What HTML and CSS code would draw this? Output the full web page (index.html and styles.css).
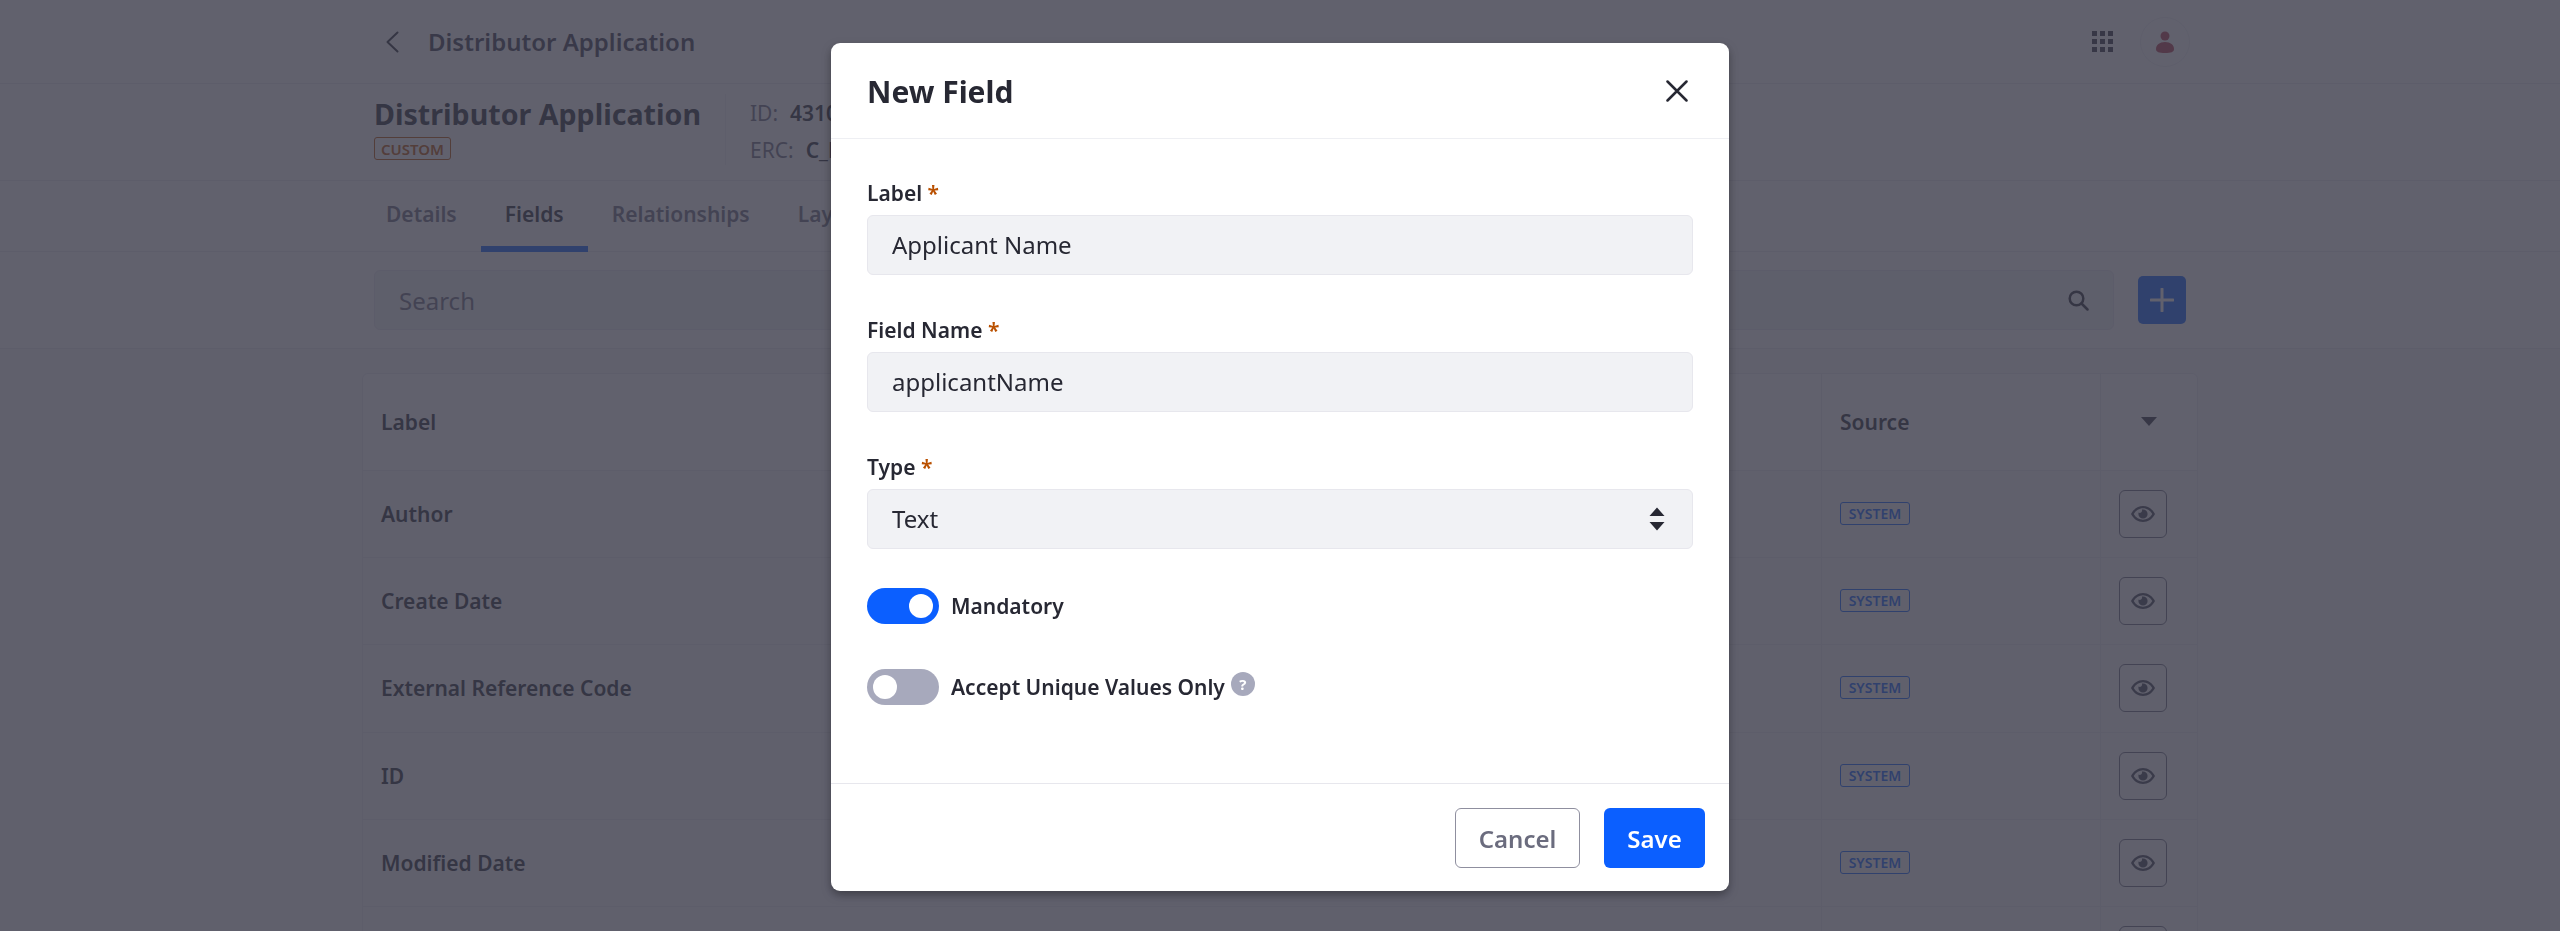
FILE: index.html
```html
<!DOCTYPE html>
<html lang="en">
<head>
<meta charset="utf-8">
<title>New Field</title>
<link rel="stylesheet" href="styles.css">
</head>
<body>
<div class="page">
  <header class="topbar">
    <div class="wrap topbar-in">
      <svg class="back" viewBox="0 0 14 22"><path d="M12.500 1.500 2.500 11l10 9.500"/></svg>
      <span class="crumb">Distributor Application</span>
      <svg class="apps" viewBox="0 0 21 21"><path d="M0 0h5v5H0zM8 0h5v5H8zM16 0h5v5h-5zM0 8h5v5H0zM8 8h5v5H8zM16 8h5v5h-5zM0 16h5v5H0zM8 16h5v5H8zM16 16h5v5h-5z"/></svg>
      <span class="avatar"><svg viewBox="0 0 20 22"><circle cx="10" cy="5" r="4.500"/><path d="M10 11c5.500 0 9 3 9 7 0 3-3 4-9 4s-9-1-9-4c0-4 3.500-7 9-7z"/></svg></span>
    </div>
  </header>
  <section class="titleband">
    <div class="wrap titleband-in">
      <div class="titlecol">
        <h1 class="title">Distributor Application</h1>
        <span class="badge badge-custom">CUSTOM</span>
      </div>
      <div class="meta">
        <div class="meta-line"><span class="meta-key">ID:</span><b class="meta-val">43101</b></div>
        <div class="meta-line"><span class="meta-key">ERC:</span><b class="meta-val">C_DistributorApplication</b></div>
      </div>
    </div>
  </section>
  <nav class="tabs">
    <div class="wrap tabs-in">
      <a class="tab">Details</a>
      <a class="tab tab-active">Fields</a>
      <a class="tab">Relationships</a>
      <a class="tab">Layouts</a>
    </div>
  </nav>
  <section class="toolband">
    <div class="wrap toolbar">
      <div class="search">
        <span class="search-text">Search</span>
        <svg class="search-icon" viewBox="0 0 21 21"><circle cx="8.500" cy="8.500" r="6.800"/><path d="m13.500 13.500 6 6"/></svg>
      </div>
      <span class="plus"><svg viewBox="0 0 24 24"><path d="M12 1v22M1 12h22"/></svg></span>
    </div>
  </section>
  <main class="content">
    <div class="table">
      <div class="row row-head"><span class="cell-label">Label</span><span class="cell-src">Source</span><span class="cell-act"><svg class="caret" viewBox="0 0 16 9"><path d="M0 0h16L8 9z"/></svg></span></div>
      <div class="row"><span class="cell-label">Author</span><span class="cell-src"><span class="badge badge-system">SYSTEM</span></span><span class="cell-act"><span class="eye-btn"><svg viewBox="0 0 24 16"><path fill-rule="evenodd" d="M12 0c5 0 9.500 3 12 8-2.500 5-7 8-12 8S2.500 13 0 8c2.500-5 7-8 12-8zm0 2.300C8.200 2.300 4.800 4.400 2.700 8c2.100 3.600 5.500 5.700 9.300 5.700s7.200-2.100 9.300-5.700C19.200 4.400 15.800 2.300 12 2.300z"/><path d="M12 3.400a4.600 4.600 0 1 1-4.600 4.600c0-.5.100-1 .2-1.400A2.400 2.400 0 0 0 10.900 3.500L12 3.400z"/></svg></span></span></div>
      <div class="row"><span class="cell-label">Create Date</span><span class="cell-src"><span class="badge badge-system">SYSTEM</span></span><span class="cell-act"><span class="eye-btn"><svg viewBox="0 0 24 16"><path fill-rule="evenodd" d="M12 0c5 0 9.500 3 12 8-2.500 5-7 8-12 8S2.500 13 0 8c2.500-5 7-8 12-8zm0 2.300C8.200 2.300 4.800 4.400 2.700 8c2.100 3.600 5.500 5.700 9.300 5.700s7.200-2.100 9.300-5.700C19.200 4.400 15.800 2.300 12 2.300z"/><path d="M12 3.400a4.600 4.600 0 1 1-4.600 4.600c0-.5.100-1 .2-1.400A2.400 2.400 0 0 0 10.900 3.500L12 3.400z"/></svg></span></span></div>
      <div class="row"><span class="cell-label">External Reference Code</span><span class="cell-src"><span class="badge badge-system">SYSTEM</span></span><span class="cell-act"><span class="eye-btn"><svg viewBox="0 0 24 16"><path fill-rule="evenodd" d="M12 0c5 0 9.500 3 12 8-2.500 5-7 8-12 8S2.500 13 0 8c2.500-5 7-8 12-8zm0 2.300C8.200 2.300 4.800 4.400 2.700 8c2.100 3.600 5.500 5.700 9.300 5.700s7.200-2.100 9.300-5.700C19.200 4.400 15.800 2.300 12 2.300z"/><path d="M12 3.400a4.600 4.600 0 1 1-4.600 4.600c0-.5.100-1 .2-1.400A2.400 2.400 0 0 0 10.900 3.500L12 3.400z"/></svg></span></span></div>
      <div class="row"><span class="cell-label">ID</span><span class="cell-src"><span class="badge badge-system">SYSTEM</span></span><span class="cell-act"><span class="eye-btn"><svg viewBox="0 0 24 16"><path fill-rule="evenodd" d="M12 0c5 0 9.500 3 12 8-2.500 5-7 8-12 8S2.500 13 0 8c2.500-5 7-8 12-8zm0 2.300C8.200 2.300 4.800 4.400 2.700 8c2.100 3.600 5.500 5.700 9.300 5.700s7.200-2.100 9.300-5.700C19.200 4.400 15.800 2.300 12 2.300z"/><path d="M12 3.400a4.600 4.600 0 1 1-4.600 4.600c0-.5.100-1 .2-1.400A2.400 2.400 0 0 0 10.900 3.500L12 3.400z"/></svg></span></span></div>
      <div class="row"><span class="cell-label">Modified Date</span><span class="cell-src"><span class="badge badge-system">SYSTEM</span></span><span class="cell-act"><span class="eye-btn"><svg viewBox="0 0 24 16"><path fill-rule="evenodd" d="M12 0c5 0 9.500 3 12 8-2.500 5-7 8-12 8S2.500 13 0 8c2.500-5 7-8 12-8zm0 2.300C8.200 2.300 4.800 4.400 2.700 8c2.100 3.600 5.500 5.700 9.300 5.700s7.200-2.100 9.300-5.700C19.200 4.400 15.800 2.300 12 2.300z"/><path d="M12 3.400a4.600 4.600 0 1 1-4.600 4.600c0-.5.100-1 .2-1.400A2.400 2.400 0 0 0 10.900 3.500L12 3.400z"/></svg></span></span></div>
      <div class="row"><span class="cell-label"></span><span class="cell-src"></span><span class="cell-act"><span class="eye-btn"></span></span></div>
    </div>
  </main>
</div>
<div class="backdrop"></div>
<div class="modal">
  <div class="modal-head">
    <h2 class="modal-title">New Field</h2>
    <svg class="close" viewBox="0 0 22 22"><path d="M1.500 1.500l19 19M20.500 1.500l-19 19"/></svg>
  </div>
  <div class="modal-body">
    <div class="field">
      <label class="flabel">Label <span class="req">*</span></label>
      <div class="input">Applicant Name</div>
    </div>
    <div class="field">
      <label class="flabel">Field Name <span class="req">*</span></label>
      <div class="input">applicantName</div>
    </div>
    <div class="field">
      <label class="flabel">Type <span class="req">*</span></label>
      <div class="input input-select">Text
        <svg class="updown" viewBox="0 0 16 24"><path d="M8 .500l7.500 8.500H.500zM8 23.500L.500 15h15z"/></svg>
      </div>
    </div>
    <div class="toggle-row toggle-first">
      <span class="switch switch-on"><span class="knob"></span></span>
      <span class="tlabel">Mandatory</span>
    </div>
    <div class="toggle-row">
      <span class="switch"><span class="knob"></span></span>
      <span class="tlabel">Accept Unique Values Only</span>
      <span class="help">?</span>
    </div>
  </div>
  <div class="modal-foot">
    <button class="btn btn-cancel">Cancel</button>
    <button class="btn btn-save">Save</button>
  </div>
</div>
</body>
</html>
```

FILE: styles.css
```css
* { box-sizing: border-box; }
html, body { margin: 0; height: 931px; overflow: hidden; }
body { font-family: "Noto Sans", "Open Sans", sans-serif; color: #272833; background: #fff; font-size: 21px; }
h1, h2 { margin: 0; }

.page { height: 931px; overflow: hidden; }
.wrap { width: 1836px; margin: 0 auto; padding: 0 12px; }

.topbar { height: 84px; border-bottom: 1px solid #e9e9ef; }
.topbar-in { display: flex; align-items: center; height: 83px; }
.back { width: 14px; height: 22px; margin-left: 11px; fill: none; stroke: #272833; stroke-width: 2; stroke-linecap: round; stroke-linejoin: round; }
.crumb { margin-left: 29px; font-size: 24px; font-weight: 600; color: #3a3b4c; flex: 1; }
.apps { width: 21px; height: 21px; fill: #30313f; margin-right: 27px; }
.avatar { width: 50px; height: 50px; margin-right: -4px; border: 1px solid #eeeef2; border-radius: 50%; display: flex; align-items: center; justify-content: center; }
.avatar svg { width: 20px; height: 22px; fill: #b5384a; }

.titleband { height: 97px; border-bottom: 1px solid #e9e9ef; }
.titleband-in { display: flex; align-items: flex-start; padding-top: 10px; }
.titlecol { display: flex; flex-direction: column; align-items: flex-start; width: 352px; height: 71px; border-right: 1px solid #eeeef2; }
.title { font-size: 28.600px; line-height: 40px; font-weight: 700; color: #272833; white-space: nowrap; }
.badge { display: inline-flex; align-items: center; justify-content: center; border: 1px solid; border-radius: 3px; font-weight: 600; }
.badge-custom { height: 23px; width: 77px; margin-top: 3px; font-size: 15px; color: #b95000; border-color: #b95000; }
.meta { margin-left: 24px; }
.meta-line { display: flex; height: 37px; align-items: center; white-space: nowrap; }
.meta-key { color: #6b6c7e; margin-right: 12px; }
.meta-val { font-weight: 600; color: #272833; }

.tabs { height: 71px; border-bottom: 1px solid #e9e9ef; }
.tabs-in { display: flex; height: 70px; }
.tab { display: flex; align-items: center; height: 71px; padding: 1px 24px; font-size: 21px; font-weight: 600; color: #6b6c7e; border-bottom: 6px solid transparent; }
.tab:first-child { margin-left: -12px; }
.tab-active { color: #272833; border-bottom-color: #0b5fff; }

.toolband { height: 97px; padding-top: 18px; border-bottom: 1px solid #e9e9ef; }
.toolbar { display: flex; align-items: center; height: 60px; }
.search { width: 1740px; height: 60px; display: flex; align-items: center; padding: 0 24px; background: #f1f2f5; border: 1px solid #e7e7ed; border-radius: 6px; }
.search-text { flex: 1; font-size: 24px; color: #6b6c7e; }
.search-icon { width: 21px; height: 21px; fill: none; stroke: #272833; stroke-width: 2.500; stroke-linecap: round; }
.plus { width: 48px; height: 48px; margin-left: 24px; background: #0b5fff; border-radius: 5px; display: flex; align-items: center; justify-content: center; }
.plus svg { width: 24px; height: 24px; fill: none; stroke: #fff; stroke-width: 3; stroke-linecap: round; }

.content { padding-top: 24px; background: #f7f8f9; height: 600px; }
.table { width: 1836px; margin: 0 auto; background: #fff; border: 1px solid #e9e9ef; border-radius: 6px 6px 0 0; }
.row { display: grid; grid-template-columns: 1fr 279px 97px; height: 87.200px; border-bottom: 1px solid #e9e9ef; background: #f8f9fb; font-size: 21px; font-weight: 600; }
.row-head { height: 97px; background: #fff; border-radius: 6px 6px 0 0; }
.cell-label, .cell-src, .cell-act { display: flex; align-items: center; }
.cell-label { padding-left: 18px; color: #272833; }
.cell-src { padding-left: 18px; border-left: 1px solid #e9e9ef; color: #272833; }
.cell-act { border-left: 1px solid #e9e9ef; padding-left: 18px; }
.caret { width: 16px; height: 9px; fill: #30313f; margin-left: 22px; margin-top: -2px; }
.badge-system { width: 70px; height: 23px; margin-top: -1px; font-size: 14px; color: #0b5fff; border-color: #0b5fff; background: none; }
.eye-btn { width: 48px; height: 48px; border: 1.500px solid #6b6c7e; border-radius: 6px; display: flex; align-items: center; justify-content: center; }
.eye-btn svg { width: 24px; height: 16px; fill: #3f4050; }

.backdrop { position: fixed; inset: 0; background: rgba(58, 58, 72, .8); }

.modal { position: fixed; left: 831px; top: 43px; width: 898px; height: 848px; background: #fff; border-radius: 9px; box-shadow: 0 4px 10px rgba(0, 0, 0, .35); display: flex; flex-direction: column; }
.modal-head { height: 96px; flex: none; border-bottom: 1px solid #eeeff3; display: flex; align-items: center; justify-content: space-between; padding: 2px 41px 0 36px; }
.modal-title { font-size: 30px; line-height: 42px; font-weight: 700; color: #272833; }
.close { width: 22px; height: 22px; margin-top: -2px; fill: none; stroke: #272833; stroke-width: 2.500; stroke-linecap: round; }
.modal-body { flex: 1; padding: 39px 36px 0; }
.field { margin-bottom: 40px; }
.flabel { display: block; height: 30px; line-height: 30px; margin-bottom: 7px; font-size: 21px; font-weight: 600; color: #272833; }
.req { color: #b95000; }
.input { height: 60px; padding: 0 24px 2px; display: flex; align-items: center; justify-content: space-between; font-size: 24px; color: #272833; background: #f1f2f5; border: 1.500px solid #e7e7ed; border-radius: 6px; }
.updown { width: 16px; height: 24px; fill: #272833; margin-right: 3px; margin-top: 2px; }
.toggle-row { display: flex; align-items: center; height: 36px; margin-top: 45px; font-size: 21px; font-weight: 600; }
.toggle-first { margin-top: -1px; }
.switch { width: 72px; height: 36px; border-radius: 18px; background: #a7a9bc; display: flex; align-items: center; padding: 0 6px; flex: none; }
.switch-on { background: #0b5fff; justify-content: flex-end; }
.knob { width: 24px; height: 24px; border-radius: 50%; background: #fff; }
.tlabel { margin-left: 12px; }
.help { width: 24px; height: 24px; margin-left: 6px; margin-top: -7px; border-radius: 50%; background: #a7a9bc; color: #fff; font-size: 15px; font-weight: 700; display: flex; align-items: center; justify-content: center; }
.modal-foot { height: 108px; flex: none; border-top: 1px solid #e7e7ed; display: flex; justify-content: flex-end; align-items: flex-start; gap: 24px; padding: 24px 24px 0; }
.btn { height: 60px; border-radius: 6px; font-family: inherit; font-size: 24px; font-weight: 600; }
.btn-cancel { width: 125px; background: #fff; color: #6b6c7e; border: 1.500px solid #8f8f9f; }
.btn-save { width: 101px; background: #0b5fff; color: #fff; border: 0; }
```
